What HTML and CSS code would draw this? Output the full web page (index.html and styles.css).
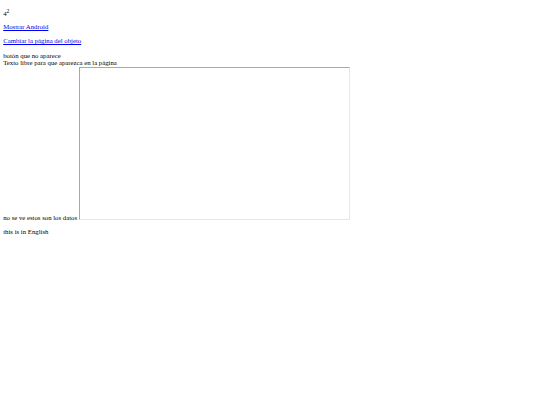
FILE: index.html
```html
<!DOCTYPE html>
<html lang="es">
<head>
<meta charset="utf-8">
<title>Página</title>
<link rel="stylesheet" href="styles.css">
</head>
<body class="page">
<p class="para">4<sup class="sup">2</sup></p>
<p class="para"><a class="link" href="#">Mostrar Android</a></p>
<p class="para"><a class="link" href="#">Cambiar la página del objeto</a></p>
<div class="block">botón que no aparece<br>Texto libre para que aparezca en la página<br>no se ve estos son los datos <span class="frame"></span></div>
<p class="para">this is in English</p>
</body>
</html>
```
FILE: styles.css
```css
html { background: #fff; }
.page {
  margin: 3.2px;
  font-family: "Liberation Serif", "Times New Roman", serif;
  font-size: 6.75px;
  color: #000;
}
.para { margin: 6.6px 0; }
.sup { font-size: 0.83em; vertical-align: super; line-height: 0; }
.link { color: #0000ee; text-decoration: underline; }
.block { margin: 7.6px 0 7.6px; }
.frame {
  display: inline-block;
  width: 269px;
  height: 151px;
  margin-top: 1px;
  border: 1px solid;
  border-color: #a8a8a8 #e8e8e8 #e8e8e8 #a8a8a8;
}
```
